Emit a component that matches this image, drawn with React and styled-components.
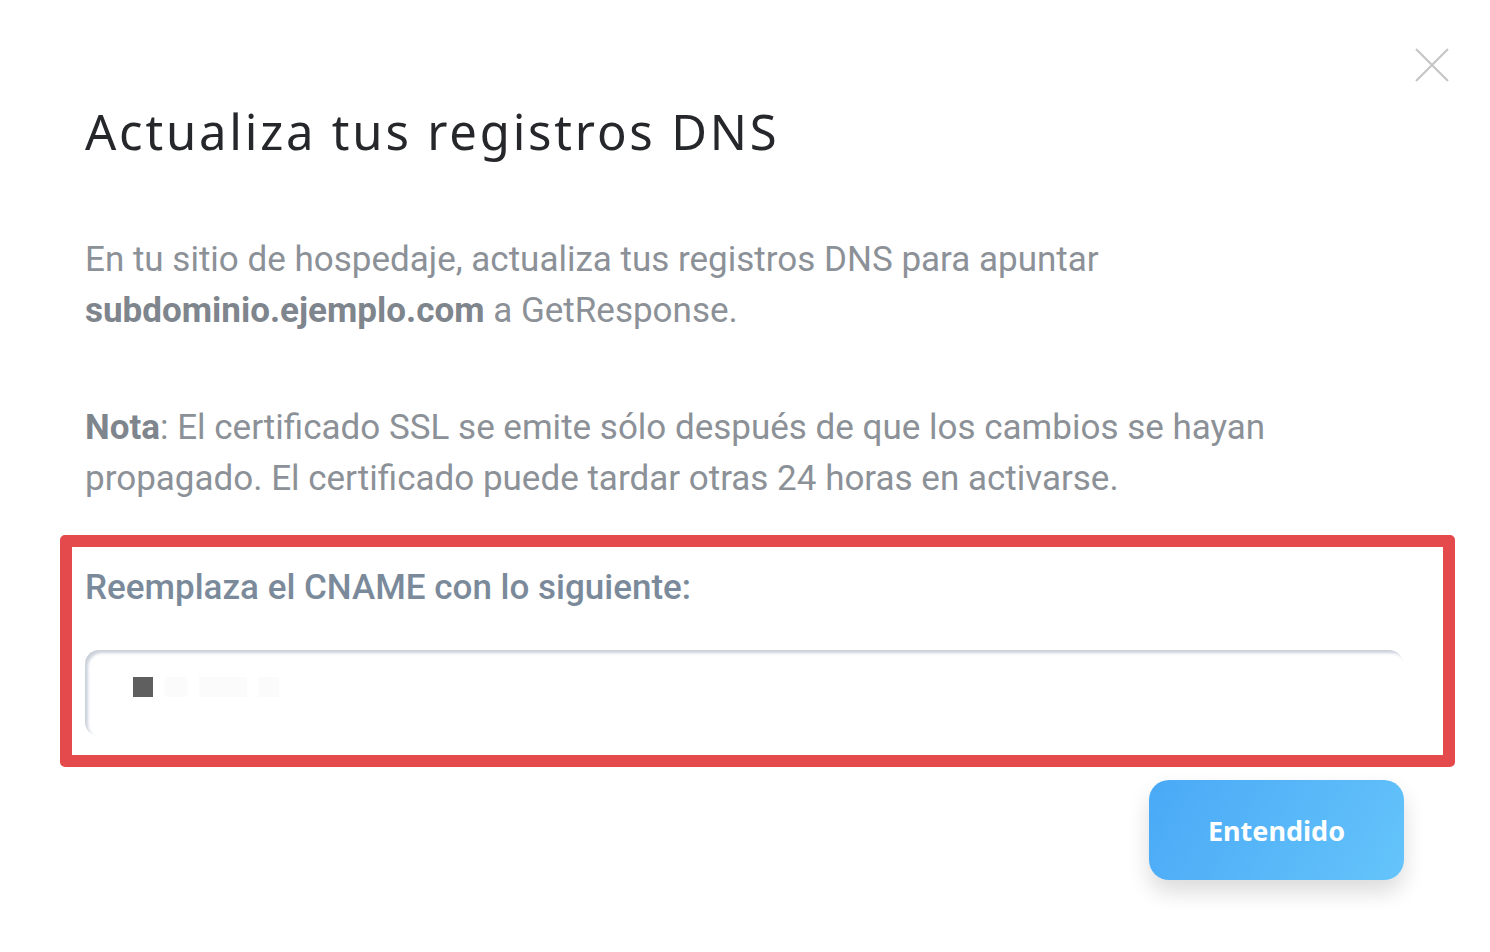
import React from "react";
import styled, { createGlobalStyle } from "styled-components";

const GlobalStyle = createGlobalStyle`
  html, body {
    margin: 0;
    padding: 0;
    background: #ffffff;
  }
  body {
    font-family: Roboto, "Liberation Sans", sans-serif;
  }
`;

export default function App() {
  return (
    <>
      <GlobalStyle />
      <Dialog>
        <CloseButton aria-label="Cerrar">
          <svg width="34" height="34" viewBox="0 0 34 34">
            <path d="M1 1 L33 33 M33 1 L1 33" stroke="#c6c6c6" strokeWidth="2.2" fill="none" />
          </svg>
        </CloseButton>
        <Title>Actualiza tus registros DNS</Title>
        <Paragraph>
          En tu sitio de hospedaje, actualiza tus registros DNS para apuntar
          <br />
          <Strong>subdominio.ejemplo.com</Strong> a GetResponse.
        </Paragraph>
        <Paragraph $top={66}>
          <Strong>Nota</Strong>: El certificado SSL se emite sólo después de que los cambios se hayan
          <br />
          propagado. El certificado puede tardar otras 24 horas en activarse.
        </Paragraph>
        <Highlight>
          <Label>Reemplaza el CNAME con lo siguiente:</Label>
          <Field>
            <Blur />
            <Ghost $w={22} />
            <Ghost $w={48} />
            <Ghost $w={20} />
          </Field>
        </Highlight>
        <Actions>
          <PrimaryButton>Entendido</PrimaryButton>
        </Actions>
      </Dialog>
    </>
  );
}

const Dialog = styled.div`
  position: relative;
  width: 1490px;
  height: 952px;
  box-sizing: border-box;
  padding: 96px 0 0 0;
  background: #ffffff;
  overflow: hidden;
`;

const CloseButton = styled.button`
  position: absolute;
  top: 48px;
  right: 41px;
  padding: 0;
  border: none;
  background: none;
  display: flex;
  cursor: pointer;
`;

const Title = styled.h1`
  margin: 0 0 68px 85px;
  font-family: "Noto Sans", "Open Sans", sans-serif;
  font-weight: 400;
  font-size: 49px;
  line-height: 70px;
  letter-spacing: 2.8px;
  color: #25272b;
`;

const Paragraph = styled.p`
  margin: ${(p) => p.$top || 0}px 0 0 85px;
  font-family: Roboto, "Liberation Sans", sans-serif;
  font-weight: 400;
  font-size: 35px;
  line-height: 51px;
  color: #8c9198;
`;

const Strong = styled.b`
  font-weight: 700;
  color: #7f858d;
`;

const Highlight = styled.div`
  margin: 31px 0 0 60px;
  width: 1395px;
  box-sizing: border-box;
  border: 12px solid #e4494c;
  border-radius: 5px;
  padding: 19px 40px 19px 13px;
  display: flex;
  flex-direction: column;
  gap: 40px;
`;

const Label = styled.div`
  font-family: Roboto, "Liberation Sans", sans-serif;
  font-weight: 500;
  font-size: 35px;
  line-height: 44px;
  color: #7b8a9a;
`;

const Field = styled.div`
  height: 86px;
  box-sizing: border-box;
  border-radius: 14px;
  background: #ffffff;
  box-shadow: inset 3px 3px 3px rgba(160, 172, 190, 0.55);
  display: flex;
  align-items: flex-start;
  gap: 12px;
  padding: 27px 0 0 48px;
`;

const Blur = styled.span`
  width: 20px;
  height: 20px;
  background: #5f5f5f;
`;

const Ghost = styled.span`
  width: ${(p) => p.$w}px;
  height: 20px;
  background: #fbfbfb;
`;

const Actions = styled.div`
  display: flex;
  justify-content: flex-end;
  padding: 13px 86px 0 0;
`;

const PrimaryButton = styled.button`
  width: 255px;
  height: 100px;
  border: none;
  border-radius: 20px;
  background: linear-gradient(120deg, #4aa9f6 0%, #64c4fa 100%);
  box-shadow: 0 12px 22px rgba(0, 0, 0, 0.14);
  color: #ffffff;
  font-family: "Noto Sans", "Open Sans", sans-serif;
  font-weight: 700;
  font-size: 27px;
  letter-spacing: 0;
  cursor: pointer;
`;
